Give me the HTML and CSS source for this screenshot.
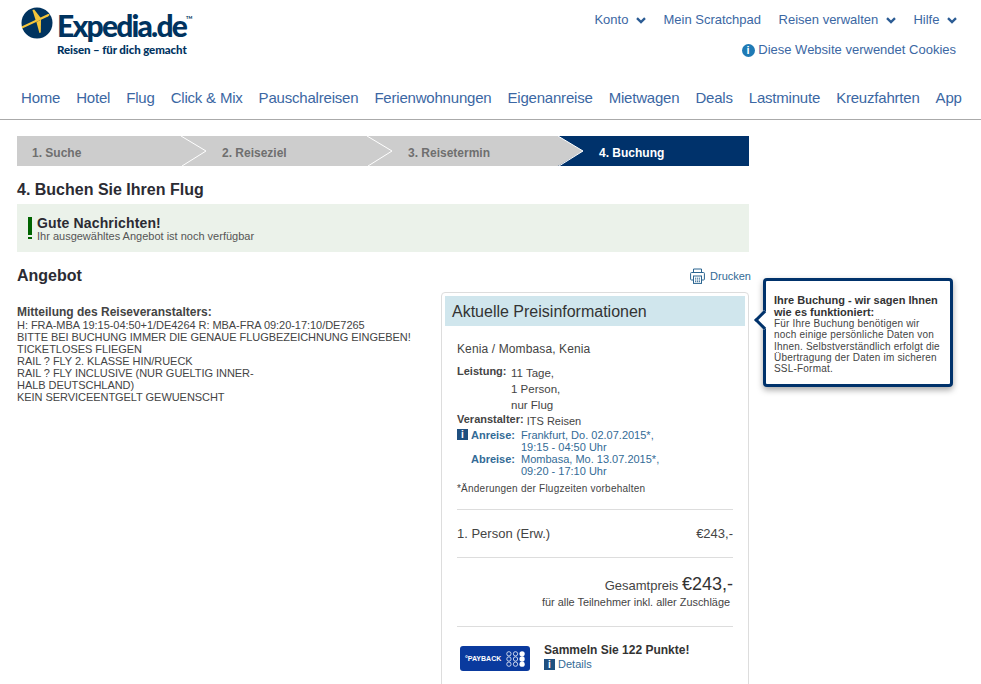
FILE: index.html
```html
<!DOCTYPE html>
<html lang="de">
<head>
    <meta charset="UTF-8">
    <meta name="viewport" content="width=device-width, initial-scale=1.0">
    <title>Buchen Sie Ihren Flug</title>
    <link rel="stylesheet" href="styles.css">
</head>

<body>
    <header class="site-header">
        <div class="header-top">
            <a class="logo" href="#">
                <svg class="logo-globe" viewBox="0 0 32 32" width="32" height="32">
                    <circle cx="16" cy="16" r="15.5" fill="#00335f"/>
                    <path d="M0.6 19.6 L27 7 Q28.6 6.6 28.6 7.6 Q28.6 8.6 27 9.4 L1.2 21.6 Z" fill="#f5c53a"/>
                    <path d="M11.4 3 L13.2 2.6 L20.2 11.6 L15 14.2 Z" fill="#f5c53a"/>
                    <path d="M15.4 15 L20 12.8 L19.8 25.4 L18.4 26 Z" fill="#f5c53a"/>
                </svg>
                <span class="logo-text">
                    <span class="logo-name">Expedia.de<sup class="logo-tm">TM</sup></span>
                    <span class="logo-claim">Reisen – für dich gemacht</span>
                </span>
            </a>
            <div class="account">
                <ul class="account-links">
                    <li>Konto <svg class="chevron" viewBox="0 0 10 7" width="10" height="7"><polyline points="1,1.2 5,5 9,1.2"/></svg></li>
                    <li>Mein Scratchpad</li>
                    <li>Reisen verwalten <svg class="chevron" viewBox="0 0 10 7" width="10" height="7"><polyline points="1,1.2 5,5 9,1.2"/></svg></li>
                    <li>Hilfe <svg class="chevron" viewBox="0 0 10 7" width="10" height="7"><polyline points="1,1.2 5,5 9,1.2"/></svg></li>
                </ul>
                <p class="cookies"><span class="cookies-icon">i</span> Diese Website verwendet Cookies</p>
            </div>
        </div>
        <!-- Main navigation -->
        <nav class="main-nav">
            <a href="#">Home</a>
            <a href="#">Hotel</a>
            <a href="#">Flug</a>
            <a href="#">Click &amp; Mix</a>
            <a href="#">Pauschalreisen</a>
            <a href="#">Ferienwohnungen</a>
            <a href="#">Eigenanreise</a>
            <a href="#">Mietwagen</a>
            <a href="#">Deals</a>
            <a href="#">Lastminute</a>
            <a href="#">Kreuzfahrten</a>
            <a href="#">App</a>
        </nav>
    </header>

    <main class="content">
        <!-- Booking steps -->
        <ol class="steps">
            <li class="step step-1">1. Suche
                <svg class="step-arrow" viewBox="0 0 26 30" width="26" height="30"><polyline points="0,0 25,15 1,30"/></svg>
            </li>
            <li class="step step-2">2. Reiseziel
                <svg class="step-arrow" viewBox="0 0 26 30" width="26" height="30"><polyline points="0,0 25,15 1,30"/></svg>
            </li>
            <li class="step step-3">3. Reisetermin
                <svg class="step-arrow" viewBox="0 0 26 30" width="26" height="30">
                    <polygon points="0,0 26,0 26,30 0,30 25,15" fill="#00326b" stroke="none"/>
                    <polyline points="0,0 25,15 1,30"/>
                </svg>
            </li>
            <li class="step step-active">4. Buchung</li>
        </ol>

        <h2 class="page-title">4. Buchen Sie Ihren Flug</h2>

        <div class="notice">
            <div class="notice-mark"><span class="notice-bar"></span><span class="notice-dot"></span></div>
            <div>
                <div class="notice-title">Gute Nachrichten!</div>
                <div class="notice-text">Ihr ausgewähltes Angebot ist noch verfügbar</div>
            </div>
        </div>

        <div class="offer-head">
            <h3 class="offer-title">Angebot</h3>
            <a class="print-link" href="#">
                <svg viewBox="0 0 15 16" width="15" height="16" class="print-icon">
                    <path d="M3.5 4.5 V1 H11.5 V4.5"/>
                    <path d="M3.5 12 H1.5 Q0.6 12 0.6 11 V5.5 Q0.6 4.5 1.5 4.5 H13.5 Q14.4 4.5 14.4 5.5 V11 Q14.4 12 13.5 12 H11.5"/>
                    <rect x="3.5" y="8" width="8" height="7.4"/>
                    <path d="M5 10.2 H10 M5 12 H10 M5 13.7 H10" stroke-dasharray="1.2 0.7"/>
                </svg>
                Drucken
            </a>
        </div>

        <div class="offer">
            <div class="operator-note">
                <strong>Mitteilung des Reiseveranstalters:</strong>
                H: FRA-MBA 19:15-04:50+1/DE4264 R: MBA-FRA 09:20-17:10/DE7265<br>
                BITTE BEI BUCHUNG IMMER DIE GENAUE FLUGBEZEICHNUNG EINGEBEN!<br>
                TICKETLOSES FLIEGEN<br>
                RAIL ? FLY 2. KLASSE HIN/RUECK<br>
                RAIL ? FLY INCLUSIVE (NUR GUELTIG INNER-<br>
                HALB DEUTSCHLAND)<br>
                KEIN SERVICEENTGELT GEWUENSCHT
            </div>

            <aside class="price-card">
                <h3 class="price-title">Aktuelle Preisinformationen</h3>
                <div class="price-body">
                    <p class="destination">Kenia / Mombasa, Kenia</p>

                    <div class="service">
                        <span class="label service-label">Leistung:</span>
                        <span class="service-value">11 Tage,<br>1 Person,<br>nur Flug</span>
                    </div>
                    <div class="organizer">
                        <span class="label">Veranstalter:</span>
                        <span class="organizer-value">ITS Reisen</span>
                    </div>

                    <div class="flights">
                        <span class="info-icon">i</span>
                        <span class="flight-label">Anreise:</span>
                        <span class="flight-value">Frankfurt, Do. 02.07.2015*,<br>19:15 - 04:50 Uhr</span>
                        <span></span>
                        <span class="flight-label">Abreise:</span>
                        <span class="flight-value">Mombasa, Mo. 13.07.2015*,<br>09:20 - 17:10 Uhr</span>
                    </div>
                    <p class="footnote">*Änderungen der Flugzeiten vorbehalten</p>

                    <div class="price-row">
                        <span>1. Person (Erw.)</span>
                        <span>€243,-</span>
                    </div>

                    <div class="total">
                        <div class="total-line">Gesamtpreis <span class="total-amount">€243,-</span></div>
                        <div class="total-note">für alle Teilnehmer inkl. aller Zuschläge</div>
                    </div>

                    <div class="payback">
                        <div class="payback-logo">
                            <span class="payback-name">°PAYBACK</span>
                            <svg viewBox="0 0 20 17" width="19" height="16" class="payback-dots">
                                <g fill="none" stroke="#fff" stroke-width="0.8">
                                    <circle cx="3" cy="3" r="2.3"/><circle cx="10" cy="3" r="2.3"/>
                                    <circle cx="3" cy="8.5" r="2.3"/><circle cx="10" cy="8.5" r="2.3"/>
                                    <circle cx="3" cy="14" r="2.3"/><circle cx="10" cy="14" r="2.3"/>
                                </g>
                                <g fill="#fff">
                                    <circle cx="17" cy="3" r="2.8"/><circle cx="17" cy="8.5" r="2.8"/><circle cx="17" cy="14" r="2.8"/>
                                </g>
                            </svg>
                        </div>
                        <div>
                            <div class="payback-title">Sammeln Sie 122 Punkte!</div>
                            <a class="payback-details" href="#"><span class="info-icon">i</span> Details</a>
                        </div>
                    </div>
                </div>
            </aside>
        </div>

        <!-- Help tooltip next to the price box -->
        <div class="tooltip">
            <strong>Ihre Buchung - wir sagen Ihnen wie es funktioniert:</strong>
            Für Ihre Buchung benötigen wir noch einige persönliche Daten von Ihnen. Selbstverständlich erfolgt die Übertragung der Daten im sicheren SSL-Format.
        </div>
    </main>
</body>

</html>
```

FILE: styles.css
```css
/* General Styles */
html {
    height: 100%;
    overflow: hidden;
}

body {
    font-family: "Liberation Sans", Arial, sans-serif;
    margin: 0;
    color: #333;
    background: #fff;
}

a {
    color: inherit;
    text-decoration: none;
}

/* Header */
.site-header {
    height: 119px;
    border-bottom: 1px solid #aaa;
}

.header-top {
    display: flex;
    justify-content: space-between;
    height: 87px;
    padding: 7px 24px 0 21px;
    box-sizing: border-box;
}

.logo {
    display: flex;
    gap: 4px;
    color: #00335f;
}

.logo-globe {
    flex: none;
}

.logo-text {
    display: flex;
    flex-direction: column;
    padding-top: 1px;
}

.logo-name {
    font-family: Lato, sans-serif;
    font-weight: 900;
    font-size: 30px;
    line-height: 35px;
    letter-spacing: -1.8px;
    white-space: nowrap;
}

.logo-tm {
    font-size: 4px;
    letter-spacing: 0;
    vertical-align: 18px;
    line-height: 0;
}

.logo-claim {
    font-family: Lato, sans-serif;
    font-weight: 900;
    font-size: 11.5px;
    line-height: 14px;
    letter-spacing: -0.1px;
    white-space: nowrap;
}

.account {
    color: #3b67a3;
    font-size: 13px;
    text-align: right;
}

.account-links {
    display: flex;
    gap: 17.5px;
    list-style: none;
    margin: 5px 0 0;
    padding: 0;
    line-height: 15px;
}

.chevron {
    margin-left: 4px;
    fill: none;
    stroke: #2b5c94;
    stroke-width: 2.4;
}

.cookies {
    margin: 15px 1px 0 0;
    line-height: 15px;
}

.cookies-icon {
    display: inline-block;
    width: 13px;
    height: 13px;
    border-radius: 50%;
    background: #1f7ab5;
    color: #fff;
    font-weight: bold;
    font-size: 11px;
    line-height: 13px;
    text-align: center;
}

.main-nav {
    display: flex;
    gap: 16px;
    padding: 2px 0 0 21px;
    color: #3b67a3;
    font-size: 15px;
    line-height: 18px;
    letter-spacing: -0.2px;
}

/* Content */
.content {
    position: relative;
    width: 732px;
    margin: 16px 0 0 17px;
}

.steps {
    display: flex;
    height: 30px;
    list-style: none;
    margin: 0;
    padding: 0;
    background: #cdcdcd;
    color: #6f6f6f;
    font-size: 12px;
    font-weight: bold;
    line-height: 34px;
}

.step,
.step-active {
    position: relative;
    box-sizing: border-box;
    padding-left: 15px;
}

.step-1 {
    width: 190px;
}

.step-2 {
    width: 186px;
}

.step-3 {
    width: 191px;
}

.step-active {
    flex: 1;
    background: #00326b;
    color: #fff;
}

.step-arrow {
    position: absolute;
    top: 0;
    right: 0;
    fill: none;
    stroke: #fff;
    stroke-width: 1;
}

.page-title {
    margin: 15px 0 5px;
    font-size: 16px;
    line-height: 18px;
    color: #2b2b33;
}

.notice {
    display: flex;
    gap: 5px;
    height: 48px;
    padding: 13px 11px 0;
    box-sizing: border-box;
    background: #ebf2ea;
}

.notice-mark {
    display: flex;
    flex-direction: column;
    gap: 2px;
    width: 4px;
}

.notice-bar {
    height: 18px;
    background: #006400;
}

.notice-dot {
    height: 2px;
    background: #006400;
}

.notice-title {
    font-size: 14px;
    font-weight: bold;
    line-height: 11px;
    letter-spacing: 0.15px;
    margin-top: 1px;
    height: 12px;
    color: #2b2b33;
}

.notice-text {
    font-size: 11px;
    line-height: 13px;
    color: #555;
}

.offer-head {
    display: flex;
    justify-content: space-between;
    height: 25px;
    margin-right: -2px;
    margin-top: 15px;
}

.offer-title {
    margin: 0;
    font-size: 16px;
    line-height: 18px;
    color: #2b2b33;
}

.print-link {
    display: flex;
    align-items: center;
    align-self: flex-start;
    gap: 5px;
    margin-top: 1px;
    color: #336b96;
    font-size: 11px;
}

.print-icon {
    fill: none;
    stroke: #2a6490;
    stroke-width: 1;
}

.offer {
    display: flex;
    justify-content: space-between;
    align-items: flex-start;
}

.operator-note {
    margin-top: 14px;
    font-size: 11px;
    line-height: 12px;
    letter-spacing: -0.05px;
    white-space: nowrap;
    color: #444;
}

.operator-note strong {
    display: block;
    margin-bottom: 1px;
    font-size: 12px;
    letter-spacing: 0;
}

/* Price box */
.price-card {
    flex: none;
    width: 308px;
    box-sizing: border-box;
    border: 1px solid #ddd;
    border-radius: 4px;
    padding: 3px;
}

.price-title {
    height: 30px;
    box-sizing: border-box;
    margin: 0;
    padding: 1px 7px 0;
    background: #d0e6ed;
    font-size: 16px;
    font-weight: normal;
    line-height: 29px;
    color: #333;
}

.price-body {
    padding: 0 12px;
    font-size: 11px;
    color: #444;
}

.destination {
    margin: 15px 0 8px;
    font-size: 12px;
    line-height: 16px;
    letter-spacing: 0.12px;
}

.label {
    font-weight: bold;
}

.service {
    display: flex;
}

.service-label {
    width: 54px;
}

.service-value {
    font-size: 11.5px;
    line-height: 16px;
}

.organizer-value {
    position: relative;
    top: 2px;
}

.flights {
    display: grid;
    grid-template-columns: 14px 50px 1fr;
    margin-top: 4px;
    line-height: 12px;
    color: #336b96;
}

.flight-label {
    font-weight: bold;
}

.info-icon {
    display: inline-block;
    width: 11px;
    height: 11px;
    background: #1f4f7f;
    color: #fff;
    font-size: 10px;
    font-weight: bold;
    line-height: 11px;
    text-align: center;
}

.footnote {
    margin: 6px 0 0;
    padding-bottom: 14px;
    border-bottom: 1px solid #ddd;
    font-size: 10px;
    line-height: 12px;
    letter-spacing: 0.23px;
}

.price-row {
    display: flex;
    justify-content: space-between;
    height: 47px;
    border-bottom: 1px solid #ddd;
    font-size: 13px;
    line-height: 47px;
}

.total {
    height: 69px;
    padding-top: 16px;
    box-sizing: border-box;
    border-bottom: 1px solid #ddd;
    text-align: right;
}

.total-line {
    font-size: 13px;
    line-height: 21px;
}

.total-amount {
    font-size: 18px;
    color: #333;
}

.total-note {
    margin-right: 3px;
    font-size: 10.9px;
    line-height: 12px;
    color: #444;
}

.payback {
    display: flex;
    gap: 14px;
    padding: 16px 0 30px 3px;
}

.payback-logo {
    display: flex;
    align-items: center;
    justify-content: space-between;
    width: 70px;
    height: 25px;
    margin-top: 3px;
    padding: 0 5px;
    box-sizing: border-box;
    border-radius: 3px;
    background: #0a3a9e;
}

.payback-name {
    color: #fff;
    font-size: 7px;
    font-weight: bold;
}

.payback-title {
    font-size: 12px;
    font-weight: bold;
    line-height: 14px;
    color: #333;
}

.payback-details {
    color: #336b96;
    line-height: 14px;
}

/* Tooltip */
.tooltip {
    position: absolute;
    top: 142px;
    left: 746px;
    width: 190px;
    height: 109px;
    box-sizing: border-box;
    padding: 13px 8px 0;
    border: 3px solid #00326b;
    border-radius: 4px;
    background: #fff;
    box-shadow: 0 3px 6px rgba(0, 0, 0, 0.35);
    font-size: 10px;
    line-height: 11.3px;
    letter-spacing: 0.2px;
    color: #444;
}

.tooltip strong {
    display: block;
    font-size: 11px;
    line-height: 12px;
    letter-spacing: 0;
    color: #333;
}

.tooltip::before {
    content: "";
    position: absolute;
    top: 32px;
    left: -9px;
    width: 14px;
    height: 14px;
    box-sizing: border-box;
    background: #fff;
    border-left: 3px solid #00326b;
    border-bottom: 3px solid #00326b;
    transform: rotate(45deg);
}
```
